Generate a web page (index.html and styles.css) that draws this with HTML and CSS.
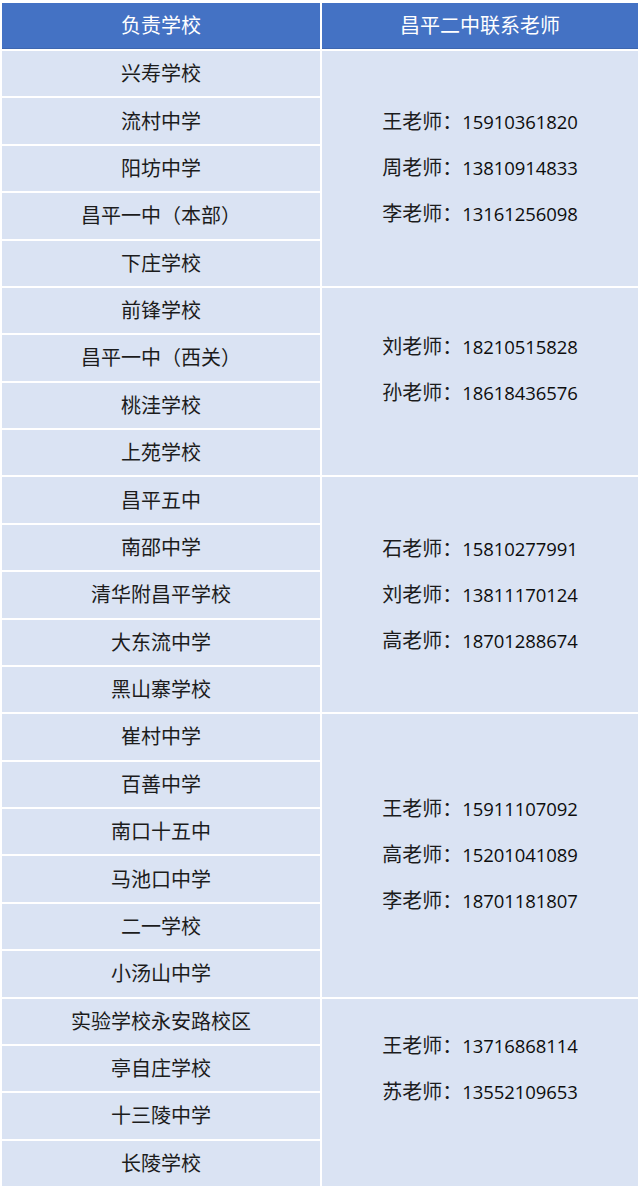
FILE: index.html
```html
<!DOCTYPE html>
<html lang="zh-CN">
<head>
<meta charset="utf-8">
<title>昌平二中联系老师</title>
<link rel="stylesheet" href="styles.css">
</head>
<body>
<div class="table">
  <div class="head school">负责学校</div>
  <div class="head contact">昌平二中联系老师</div>

  <div class="cell school">兴寿学校</div>
  <div class="cell contact span5">
    <div class="line">王老师：<span class="num">15910361820</span></div>
    <div class="line">周老师：<span class="num">13810914833</span></div>
    <div class="line">李老师：<span class="num">13161256098</span></div>
  </div>
  <div class="cell school">流村中学</div>
  <div class="cell school">阳坊中学</div>
  <div class="cell school">昌平一中（本部）</div>
  <div class="cell school">下庄学校</div>

  <div class="cell school">前锋学校</div>
  <div class="cell contact span4 lift-half">
    <div class="line">刘老师：<span class="num">18210515828</span></div>
    <div class="line">孙老师：<span class="num">18618436576</span></div>
  </div>
  <div class="cell school">昌平一中（西关）</div>
  <div class="cell school">桃洼学校</div>
  <div class="cell school">上苑学校</div>

  <div class="cell school">昌平五中</div>
  <div class="cell contact span5">
    <div class="line">石老师：<span class="num">15810277991</span></div>
    <div class="line">刘老师：<span class="num">13811170124</span></div>
    <div class="line">高老师：<span class="num">18701288674</span></div>
  </div>
  <div class="cell school">南邵中学</div>
  <div class="cell school">清华附昌平学校</div>
  <div class="cell school">大东流中学</div>
  <div class="cell school">黑山寨学校</div>

  <div class="cell school">崔村中学</div>
  <div class="cell contact span6">
    <div class="line">王老师：<span class="num">15911107092</span></div>
    <div class="line">高老师：<span class="num">15201041089</span></div>
    <div class="line">李老师：<span class="num">18701181807</span></div>
  </div>
  <div class="cell school">百善中学</div>
  <div class="cell school">南口十五中</div>
  <div class="cell school">马池口中学</div>
  <div class="cell school">二一学校</div>
  <div class="cell school">小汤山中学</div>

  <div class="cell school">实验学校永安路校区</div>
  <div class="cell contact span4 lift-full">
    <div class="line">王老师：<span class="num">13716868114</span></div>
    <div class="line">苏老师：<span class="num">13552109653</span></div>
  </div>
  <div class="cell school">亭自庄学校</div>
  <div class="cell school">十三陵中学</div>
  <div class="cell school">长陵学校</div>
</div>
</body>
</html>
```
FILE: styles.css
```css
html, body {
  margin: 0;
  padding: 0;
  background: #ffffff;
}

body {
  font-family: "Noto Sans CJK SC", "Noto Sans", sans-serif;
  color: #1c1c1c;
}

.table {
  margin: 3px 0 0 2px;
  width: 636px;
  display: grid;
  grid-template-columns: 318px 316px;
  column-gap: 2px;
  row-gap: 2px;
  grid-template-rows: 46px;
  grid-auto-rows: 45.375px;
}

.school {
  grid-column: 1;
}

.contact {
  grid-column: 2;
}

.head {
  background: #4472c4;
  color: #ffffff;
  font-size: 20px;
  display: flex;
  align-items: center;
  justify-content: center;
  border-bottom: 1px solid #3d66b0;
  box-sizing: border-box;
  padding-bottom: 2px;
}

.cell {
  background: #dae3f3;
  font-size: 20px;
  display: flex;
  align-items: center;
  justify-content: center;
  box-sizing: border-box;
}

.cell.school {
  padding-bottom: 2px;
}

.cell.contact {
  flex-direction: column;
  padding-bottom: 2px;
}

.span4 { grid-row: span 4; }
.span5 { grid-row: span 5; }
.span6 { grid-row: span 6; }

.cell.lift-half { padding-bottom: 26px; }
.cell.lift-full { padding-bottom: 48px; }

.line {
  height: 46px;
  line-height: 46px;
  white-space: nowrap;
}

.num {
  font-family: "Open Sans", "Noto Sans", sans-serif;
  font-size: 18.5px;
  color: #0d0d0d;
  letter-spacing: -0.1px;
}
```
